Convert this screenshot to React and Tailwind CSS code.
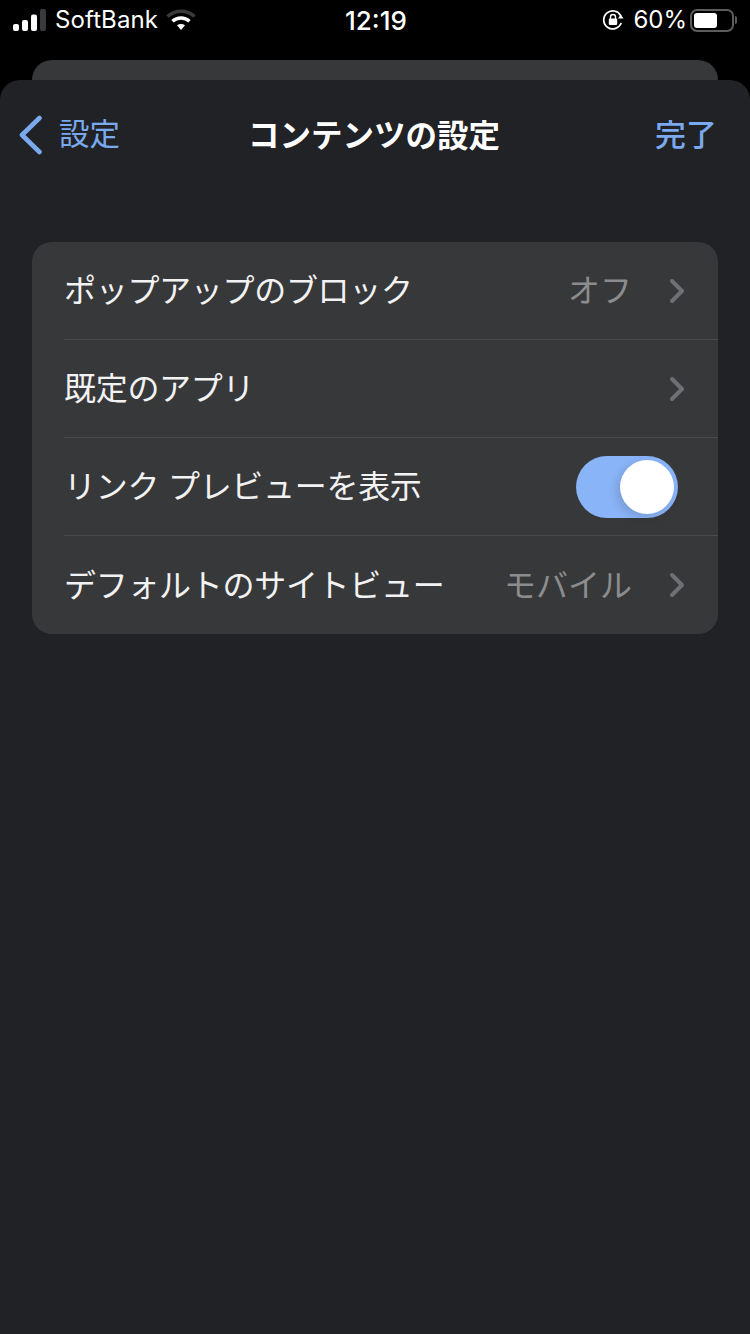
import React from "react";

const CJK = "font-['Noto_Sans_CJK_JP','Noto_Sans_CJK_SC',sans-serif]";

const Chevron = () => (
  <svg width="16" height="26" viewBox="0 0 16 26" fill="none" className="shrink-0">
    <path d="M3 3 L13 13 L3 23" stroke="#6f7073" strokeWidth="4" strokeLinecap="round" strokeLinejoin="round" />
  </svg>
);

const Signal = () => (
  <svg width="34" height="22" viewBox="0 0 34 22" className="shrink-0">
    <rect x="0" y="15" width="6" height="7" rx="2" fill="#fff" />
    <rect x="9" y="11" width="6" height="11" rx="2" fill="#fff" />
    <rect x="18" y="5.5" width="6" height="16.5" rx="2" fill="#fff" />
    <rect x="27" y="0" width="6" height="22" rx="2" fill="#3a3a3c" />
  </svg>
);

const Wifi = () => (
  <svg width="30" height="22" viewBox="0 0 30 22" fill="none" className="shrink-0">
    <path d="M1.5 7.5 C9 0.5 21 0.5 28.5 7.5" stroke="#3a3a3c" strokeWidth="3.6" />
    <path d="M6.5 12.2 C11.5 8 18.5 8 23.5 12.2" stroke="#fff" strokeWidth="3.4" />
    <path d="M11 16.2 C13.5 14.6 16.5 14.6 19 16.2 L15 21 Z" fill="#fff" />
  </svg>
);

const RotationLock = () => (
  <svg width="22" height="22" viewBox="0 0 22 22" fill="none" className="shrink-0">
    <path d="M19 14.5 A9 9 0 1 1 18.6 6.5" stroke="#fff" strokeWidth="1.7" strokeLinecap="round" />
    <path d="M16 9.5 L21.5 9.5 L18.7 5.5 Z" fill="#fff" />
    <rect x="6.8" y="9.6" width="8.4" height="6.4" rx="1.2" fill="#fff" />
    <path d="M8.5 10 V8 a2.5 2.5 0 0 1 5 0 V10" stroke="#fff" strokeWidth="1.4" />
  </svg>
);

const Battery = () => (
  <div className="flex items-center shrink-0">
    <div className="w-[44px] h-[23px] rounded-[7px] border-2 border-[#5c5c5e] p-[2px]">
      <div className="w-[23px] h-full rounded-[3px] bg-white" />
    </div>
    <div className="w-[2px] h-[8px] ml-[1px] rounded-r-sm bg-[#5c5c5e]" />
  </div>
);

const Toggle = () => (
  <div className="relative w-[102px] h-[62px] rounded-full bg-[#8ab4f8]">
    <div className="absolute top-[4px] right-[4px] w-[54px] h-[54px] rounded-full bg-white shadow-[-3px_3px_10px_rgba(0,0,0,0.15)]" />
  </div>
);

const Row = ({ label, value, chevron = true, toggle = false, last = false }) => (
  <div className="pl-8">
    <div className={`h-[98px] flex items-center ${toggle ? "pr-10" : "pr-[33px]"} ${last ? "" : "border-b border-[#48494b]"}`}>
      <span className="pb-[5px] text-[32px] leading-none text-[#f2f2f3] tracking-[-0.3px] [word-spacing:2px] whitespace-nowrap">{label}</span>
      <div className="ml-auto flex items-center">
        {value && <span className="pb-[5px] text-[32px] leading-none text-[#8b8c8e] whitespace-nowrap mr-[37px]">{value}</span>}
        {chevron && <Chevron />}
        {toggle && <Toggle />}
      </div>
    </div>
  </div>
);

export default function App() {
  return (
    <div className={`w-[750px] h-[1334px] bg-black flex flex-col overflow-hidden ${CJK}`}>
      <div className="h-[60px] px-[13px] pb-5 flex items-center text-white relative">
        <div className="flex items-center">
          <Signal />
          <span className="ml-[8px] text-[24px] leading-none tracking-[0.1px] font-['Inter',sans-serif] font-normal">SoftBank</span>
          <span className="ml-[8px]"><Wifi /></span>
        </div>
        <span className="absolute left-[345px] top-[8px] text-[26px] leading-[26px] font-medium font-['Inter',sans-serif]">12:19</span>
        <div className="ml-auto flex items-center">
          <RotationLock />
          <span className="ml-[9px] mr-[3px] text-[24px] leading-none font-['Inter',sans-serif] font-normal">60%</span>
          <Battery />
        </div>
      </div>

      <div className="mx-8 h-5 rounded-t-[20px] bg-[#37383a]" />

      <div className="flex-1 rounded-t-[20px] bg-[#212226] px-8">
        <div className="relative h-[110px] flex items-center justify-between -mx-8 pl-[18px] pr-[33px]">
          <div className="flex items-center">
            <svg width="26" height="40" viewBox="0 0 26 40" fill="none" className="shrink-0">
              <path d="M21.5 3 L4 20 L21.5 37" stroke="#7aa9ee" strokeWidth="4.6" strokeLinecap="round" strokeLinejoin="round" />
            </svg>
            <span className="ml-[15px] pb-[5px] text-[30.5px] leading-none text-[#7aa9ee]">設定</span>
          </div>
          <span className="absolute left-[248px] top-[38px] text-[31.5px] leading-none font-semibold text-white whitespace-nowrap">コンテンツの設定</span>
          <span className="pb-[5px] text-[31px] leading-none font-medium text-[#7aa9ee]">完了</span>
        </div>

        <div className="mt-[52px] rounded-[20px] bg-[#37383a] overflow-hidden">
          <Row label="ポップアップのブロック" value="オフ" />
          <Row label="既定のアプリ" />
          <Row label="リンク プレビューを表示" chevron={false} toggle />
          <Row label="デフォルトのサイトビュー" value="モバイル" last />
        </div>
      </div>
    </div>
  );
}
